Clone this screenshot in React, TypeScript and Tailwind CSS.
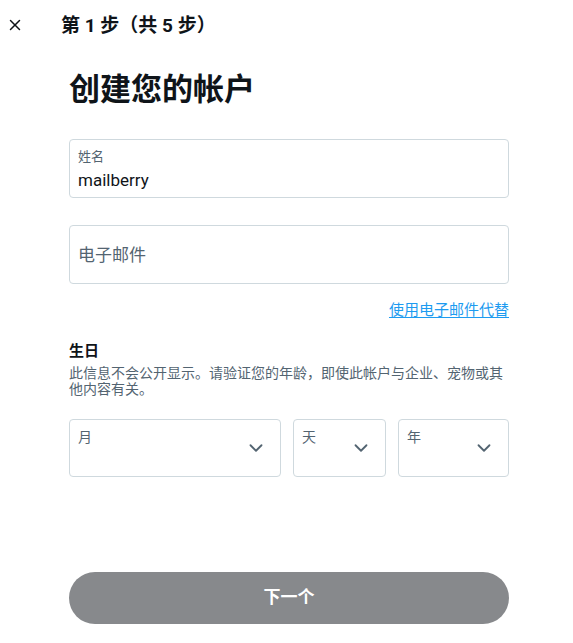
import { X, ChevronDown } from "lucide-react";

const font = { fontFamily: '"Roboto", "Noto Sans CJK SC", sans-serif' };

function SelectBox({ label, width }: { label: string; width: string }) {
  return (
    <div
      className={`relative h-[58px] ${width} rounded-[4px] border border-[#cfd9de] bg-white`}
    >
      <span className="absolute left-[8px] top-[8px] text-[14px] leading-[18px] text-[#536471]">
        {label}
      </span>
      <ChevronDown
        className="absolute right-[13px] top-[17px] size-[22px] text-[#536471]"
        strokeWidth={2}
      />
    </div>
  );
}

export default function App() {
  return (
    <div className="min-h-[643px] w-full bg-white text-[#0f1419]" style={font}>
      {/* Header */}
      <div className="flex h-[50px] items-center">
        <button className="ml-[5px] flex size-[20px] items-center justify-center text-[#0f1419]">
          <X className="size-[18px]" strokeWidth={2} />
        </button>
        <h1 className="ml-[36px] mt-[2px] text-[19px] font-bold leading-[24px]">
          第 1 步（共 5 步）
        </h1>
      </div>

      <div className="ml-[69px] w-[440px]">
        <h2 className="mt-[21px] text-[31px] font-bold leading-[38px]">创建您的帐户</h2>

        {/* Name */}
        <div className="mt-[30px] h-[59px] rounded-[4px] border border-[#cfd9de] px-[8px] pt-[9px]">
          <div className="text-[13px] leading-[16px] text-[#536471]">姓名</div>
          <div className="mt-[4px] text-[17px] leading-[22px]">mailberry</div>
        </div>

        {/* Email */}
        <div className="mt-[27px] flex h-[59px] items-center rounded-[4px] border border-[#cfd9de] px-[8px]">
          <span className="text-[17px] leading-[22px] text-[#536471]">电子邮件</span>
        </div>

        <div className="mt-[16px] flex justify-end">
          <a className="text-[15px] leading-[20px] text-[#1d9bf0] underline underline-offset-[2px]">
            使用电子邮件代替
          </a>
        </div>

        {/* Birthday */}
        <div className="mt-[21px] text-[15px] font-bold leading-[20px]">生日</div>
        <p className="mt-[4px] text-[14px] leading-[16px] text-[#536471]">
          此信息不会公开显示。请验证您的年龄，即使此帐户与企业、宠物或其他内容有关。
        </p>

        <div className="mt-[22px] flex gap-[12px]">
          <SelectBox label="月" width="w-[212px]" />
          <SelectBox label="天" width="w-[93px]" />
          <SelectBox label="年" width="w-[111px]" />
        </div>

        <button className="mt-[95px] flex h-[52px] w-full items-center justify-center rounded-full bg-[#87898c] text-[17px] font-bold text-white">
          下一个
        </button>
      </div>
    </div>
  );
}
